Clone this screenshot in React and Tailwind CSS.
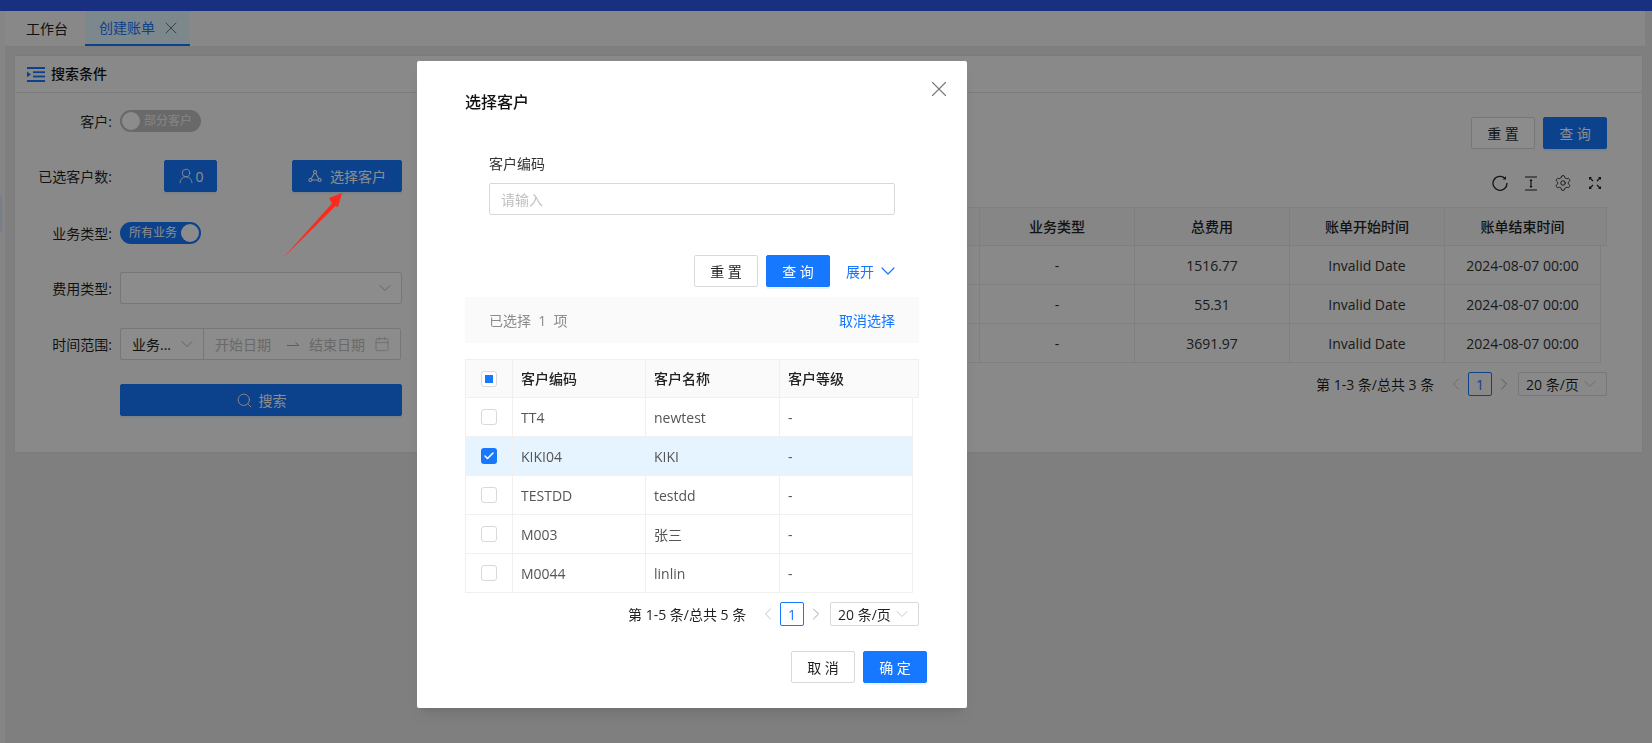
import React from "react";
import { ChevronDown, ChevronLeft, ChevronRight, X, Search, Calendar, Settings, UserRound, Check } from "lucide-react";

const FONT = { fontFamily: '"Open Sans","Noto Sans CJK SC",sans-serif' };

function Btn({ children, primary, className = "" }) {
  return (
    <div className={`flex items-center justify-center rounded-[2px] h-[32px] text-[14px] border ${primary ? "bg-[#1677ff] border-[#1677ff] text-white shadow-[0_2px_0_rgba(5,145,255,0.1)]" : "bg-white border-[#d9d9d9] text-[rgba(0,0,0,0.88)]"} ${className}`}>
      {children}
    </div>
  );
}

function Switch({ on, label }) {
  return (
    <div className={`w-[81px] h-[22px] rounded-full flex items-center relative text-[12px] ${on ? "bg-[#1677ff] text-white justify-start pl-[9px]" : "bg-[#bfbfbf] text-white/80 justify-end pr-[9px]"}`}>
      {label}
      <span className={`absolute top-[2px] w-[18px] h-[18px] rounded-full bg-white ${on ? "right-[2px]" : "left-[2px]"}`} />
    </div>
  );
}

function FormRow({ label, children, className = "" }) {
  return (
    <div className={`flex items-center ${className}`}>
      <div className="w-[97px] whitespace-nowrap text-right text-[14px] text-[rgba(0,0,0,0.88)] shrink-0">{label}:</div>
      <div className="ml-[8px] flex items-center">{children}</div>
    </div>
  );
}

function Pager({ text, textW }) {
  return (
    <div className="flex items-center h-[24px] text-[14px] text-[rgba(0,0,0,0.88)]">
      <span className="whitespace-nowrap" style={{ width: textW }}>{text}</span>
      <ChevronLeft size={20} strokeWidth={1.1} className="text-[#bdbdbd] ml-[10px] mr-[2px]" />
      <div className="w-[24px] h-[24px] border border-[#1677ff] rounded-[2px] text-[#1677ff] flex items-center justify-center">1</div>
      <ChevronRight size={20} strokeWidth={1.1} className="text-[#9a9a9a] ml-[2px] mr-[4px]" />
      <div className="w-[89px] h-[24px] border border-[#d9d9d9] rounded-[2px] flex items-center pl-[7px] pr-[6px] justify-between">
        <span className="whitespace-nowrap">20 条/页</span>
        <ChevronDown size={20} strokeWidth={1} className="text-[#bdbdbd]" />
      </div>
    </div>
  );
}

function CheckBox({ state }) {
  if (state === "checked") {
    return (
      <span className="w-[16px] h-[16px] rounded-[3px] bg-[#1677ff] flex items-center justify-center">
        <Check size={12} strokeWidth={3.2} className="text-white" />
      </span>
    );
  }
  return (
    <span className="w-[16px] h-[16px] rounded-[3px] border border-[#d9d9d9] bg-white flex items-center justify-center">
      {state === "partial" && <span className="w-[8px] h-[8px] bg-[#1677ff]" />}
    </span>
  );
}

const customers = [
  ["TT4", "newtest"],
  ["KIKI04", "KIKI", true],
  ["TESTDD", "testdd"],
  ["M003", "张三"],
  ["M0044", "linlin"],
];

const bills = [["1516.77"], ["55.31"], ["3691.97"]];

function ListIcon() {
  return (
    <svg width="18" height="15" viewBox="0 0 18 15" className="shrink-0">
      <g fill="#1677ff">
        <rect x="0" y="0" width="18" height="2" />
        <rect x="6" y="4.3" width="12" height="1.8" />
        <rect x="6" y="8.6" width="12" height="1.8" />
        <rect x="0" y="13" width="18" height="2" />
        <path d="M0 4.5 L4 7.4 L0 10.3 Z" />
      </g>
    </svg>
  );
}

function ClusterIcon() {
  return (
    <svg width="14" height="14" viewBox="0 0 14 14" fill="none" stroke="currentColor" strokeWidth="1.1">
      <circle cx="7" cy="3" r="1.5" />
      <circle cx="2.4" cy="11" r="1.5" />
      <circle cx="11.6" cy="11" r="1.5" />
      <path d="M6.2 4.4 L3.2 9.7 M7.8 4.4 L10.8 9.7 M4 11 H10" />
    </svg>
  );
}

function ReloadIcon() {
  return (
    <svg width="16" height="16" viewBox="0 0 16 16" fill="none" stroke="#222" strokeWidth="1.3">
      <path d="M13 3.4 A7 7 0 1 0 15 8" />
      <path d="M14 1.2 L14 4.6 L10.6 4.6 Z" fill="#222" stroke="none" />
    </svg>
  );
}

function HeightIcon() {
  return (
    <svg width="14" height="15" viewBox="0 0 14 15" fill="none" stroke="#222" strokeWidth="1.2">
      <path d="M1 1 H13 M1 14 H13 M7 3.5 V11.5" />
      <path d="M5.4 5 L7 3.2 L8.6 5 Z M5.4 10 L7 11.8 L8.6 10 Z" fill="#222" stroke="none" />
    </svg>
  );
}

function FullIcon() {
  return (
    <svg width="14" height="14" viewBox="0 0 14 14" fill="none" stroke="#222" strokeWidth="1.2">
      <path d="M1.5 1.5 L5 5 M12.5 1.5 L9 5 M1.5 12.5 L5 9 M12.5 12.5 L9 9" />
      <path d="M1 1 H4 L1 4 Z M13 1 H10 L13 4 Z M1 13 H4 L1 10 Z M13 13 H10 L13 10 Z" fill="#222" stroke="none" />
    </svg>
  );
}

export default function App() {
  return (
    <div style={FONT} className="relative w-[1652px] h-[743px] overflow-hidden bg-[#e8e8e8] flex flex-col">
      <div className="h-[11px] bg-[#2d58e8] shrink-0" />
      <div className="flex flex-1 min-h-0">
        <div className="w-[5px] shrink-0 bg-[#f2f2f2] relative">
          <div className="absolute left-0 top-[185px] w-[2px] h-[36px] bg-[#dbe7ff]" />
        </div>
        <div className="flex-1 min-w-0">
          <div className="mr-[7px] h-[36px] flex items-stretch bg-[#f8f8f8] border-b border-[#e4e4e4]">
            <div className="w-[80px] flex items-center pl-[21px] text-[14px] text-[#222]">工作台</div>
            <div className="w-[105px] flex items-center pl-[14px] bg-[#e2f8ff] border-b-2 border-[#1677ff] text-[14px] text-[#1677ff]">
              创建账单
              <X size={20} strokeWidth={1.1} className="ml-[6px] text-[#666]" />
            </div>
          </div>
          <div className="mt-[8px] ml-[9px] w-[1629px] h-[398px] bg-[#f9f9f9] border border-[#e2e2e2]">
            <div className="h-[37px] border-b border-[#e4e4e4] flex items-center pl-[12px] gap-[6px]">
              <ListIcon />
              <span className="text-[14px] font-medium text-[#111] pb-[2px]">搜索条件</span>
            </div>
            <div className="flex">
              <div className="w-[403px] shrink-0 pt-[17px]">
                <FormRow label="客户" className="h-[22px]"><Switch label="部分客户" /></FormRow>
                <FormRow label="已选客户数" className="mt-[28px] h-[32px]">
                  <Btn primary className="w-[53px] ml-[44px]"><UserRound size={18} strokeWidth={1.2} />0</Btn>
                  <Btn primary className="w-[110px] ml-[75px] gap-[8px]"><ClusterIcon />选择客户</Btn>
                </FormRow>
                <FormRow label="业务类型" className="mt-[30px] h-[22px]"><Switch on label="所有业务" /></FormRow>
                <FormRow label="费用类型" className="mt-[28px] h-[32px]">
                  <div className="w-[282px] h-[32px] border border-[#d9d9d9] rounded-[2px] bg-white flex items-center justify-end pr-[6px]">
                    <ChevronDown size={20} strokeWidth={1} className="text-[#aaa]" />
                  </div>
                </FormRow>
                <FormRow label="时间范围" className="mt-[24px] h-[32px]">
                  <div className="w-[281px] h-[32px] border border-[#d9d9d9] rounded-[2px] bg-white flex items-center text-[14px]">
                    <div className="w-[83px] h-full border-r border-[#d9d9d9] flex items-center pl-[11px] pr-[6px] justify-between text-[#222]">
                      <span className="whitespace-nowrap">业务...</span>
                      <ChevronDown size={20} strokeWidth={1} className="text-[#aaa]" />
                    </div>
                    <span className="ml-[11px] text-[#bfbfbf] whitespace-nowrap">开始日期</span>
                    <svg width="14" height="6" viewBox="0 0 14 6" fill="none" stroke="#aaa" strokeWidth="1" className="ml-[15px]"><path d="M1 4.5 H13 L9.5 1.5" /></svg>
                    <span className="ml-[9px] text-[#bfbfbf] whitespace-nowrap">结束日期</span>
                    <Calendar size={16} strokeWidth={1.2} className="ml-[9px] text-[#bfbfbf]" />
                  </div>
                </FormRow>
                <div className="mt-[24px] ml-[105px] w-[282px]">
                  <Btn primary className="gap-[6px] w-full"><Search size={17} strokeWidth={1.3} />搜索</Btn>
                </div>
              </div>
              <div className="flex-1 min-w-0 pr-[35px] relative">
                <div className="flex justify-end gap-[8px] pt-[24px]">
                  <Btn className="w-[64px]">重 置</Btn>
                  <Btn primary className="w-[64px]">查 询</Btn>
                </div>
                <div className="flex justify-end items-center gap-[16px] h-[16px] mt-[26px] pr-[5px]">
                  <ReloadIcon />
                  <HeightIcon />
                  <Settings size={18} strokeWidth={1.2} className="text-[#222]" />
                  <FullIcon />
                </div>
                <div className="mt-[16px] text-[14px] text-[#222] ml-[12px]">
                  <div className="flex h-[39px] bg-[#f5f5f5] border border-[#e8e8e8] font-medium items-center">
                    <div className="flex-1 h-full border-r border-[#e8e8e8]" />
                    {["业务类型", "总费用", "账单开始时间", "账单结束时间"].map((h, i) => (
                      <div key={h} className={`${i === 3 ? "w-[161px]" : "w-[155px] border-r border-[#e8e8e8]"} h-full flex items-center justify-center`}>
                        <span className={i === 3 ? "pr-[6px]" : ""}>{h}</span>
                      </div>
                    ))}
                  </div>
                  {bills.map(([fee]) => (
                    <div key={fee} className="flex h-[39px] mr-[6px] border-b border-x border-[#e8e8e8] items-center text-[#333]">
                      <div className="flex-1 h-full border-r border-[#e8e8e8]" />
                      <div className="w-[155px] h-full border-r border-[#e8e8e8] flex items-center justify-center">-</div>
                      <div className="w-[155px] h-full border-r border-[#e8e8e8] flex items-center justify-center">{fee}</div>
                      <div className="w-[155px] h-full border-r border-[#e8e8e8] flex items-center justify-center">Invalid Date</div>
                      <div className="w-[155px] h-full flex items-center justify-center">2024-08-07 00:00</div>
                    </div>
                  ))}
                  <div className="flex justify-end mt-[9px]">
                    <Pager text="第 1-3 条/总共 3 条" textW={120} />
                  </div>
                </div>
              </div>
            </div>
          </div>
        </div>
      </div>

      {/* mask */}
      <div className="fixed inset-0 bg-black/45" />

      {/* annotation arrow */}
      <svg className="absolute left-[280px] top-[190px]" width="70" height="72" viewBox="0 0 70 72">
        <path d="M3 68 L52 13.5 L49 8 L62 3 L58 17 L55.5 16 Z" fill="#fb2a1c" />
      </svg>

      {/* modal */}
      <div className="fixed left-[417px] top-[61px] w-[550px] h-[647px] bg-white rounded-[2px] shadow-lg">
        <X size={26} strokeWidth={1} className="absolute right-[15px] top-[15px] text-[#777]" />
        <div className="pt-[31px] pl-[48px] pr-[48px]">
          <div className="text-[16px] font-medium leading-[20px] text-[#111]">选择客户</div>
          <div className="mt-[41px] mx-[24px]">
            <div className="text-[14px] leading-[22px] text-[#333]">客户编码</div>
            <div className="mt-[8px] h-[32px] border border-[#d9d9d9] rounded-[2px] flex items-center pl-[11px] text-[14px] text-[#bfbfbf]">请输入</div>
          </div>
          <div className="mt-[40px] flex items-center justify-end pr-[19px]">
            <Btn className="w-[64px] text-[#111]">重 置</Btn>
            <Btn primary className="w-[64px] ml-[8px]">查 询</Btn>
            <span className="ml-[16px] text-[14px] text-[#1677ff]">展开</span>
            <ChevronDown size={24} strokeWidth={1.2} className="ml-[2px] text-[#1677ff]" />
          </div>
          <div className="mt-[10px] h-[46px] bg-[#fafafa] rounded-[2px] flex items-center justify-between px-[24px] text-[14px]">
            <span className="text-[#8c8c8c] whitespace-pre">已选择  1  项</span>
            <span className="text-[#1677ff]">取消选择</span>
          </div>
          <div className="mt-[16px] text-[14px]">
            <div className="flex h-[39px] bg-[#fafafa] border border-[#f0f0f0] font-medium text-[#222]">
              <div className="w-[47px] border-r border-[#f0f0f0] flex items-center pl-[15px]"><CheckBox state="partial" /></div>
              <div className="w-[133px] border-r border-[#f0f0f0] flex items-center pl-[8px]">客户编码</div>
              <div className="w-[134px] border-r border-[#f0f0f0] flex items-center pl-[8px]">客户名称</div>
              <div className="flex-1 flex items-center pl-[8px]">客户等级</div>
            </div>
            {customers.map(([code, name, sel]) => (
              <div key={code} className={`flex h-[39px] mr-[6px] border-b border-x border-[#f0f0f0] text-[#555] ${sel ? "bg-[#e6f4ff]" : ""}`}>
                <div className="w-[47px] border-r border-[#f0f0f0] flex items-center pl-[15px]"><CheckBox state={sel ? "checked" : "none"} /></div>
                <div className="w-[133px] border-r border-[#f0f0f0] flex items-center pl-[8px]">{code}</div>
                <div className="w-[134px] border-r border-[#f0f0f0] flex items-center pl-[8px]">{name}</div>
                <div className="flex-1 flex items-center pl-[8px]">-</div>
              </div>
            ))}
            <div className="flex justify-end mt-[9px]">
              <Pager text="第 1-5 条/总共 5 条" textW={120} />
            </div>
          </div>
        </div>
        <div className="absolute right-[40px] bottom-[25px] flex gap-[8px]">
          <Btn className="w-[64px]">取 消</Btn>
          <Btn primary className="w-[64px]">确 定</Btn>
        </div>
      </div>
    </div>
  );
}
